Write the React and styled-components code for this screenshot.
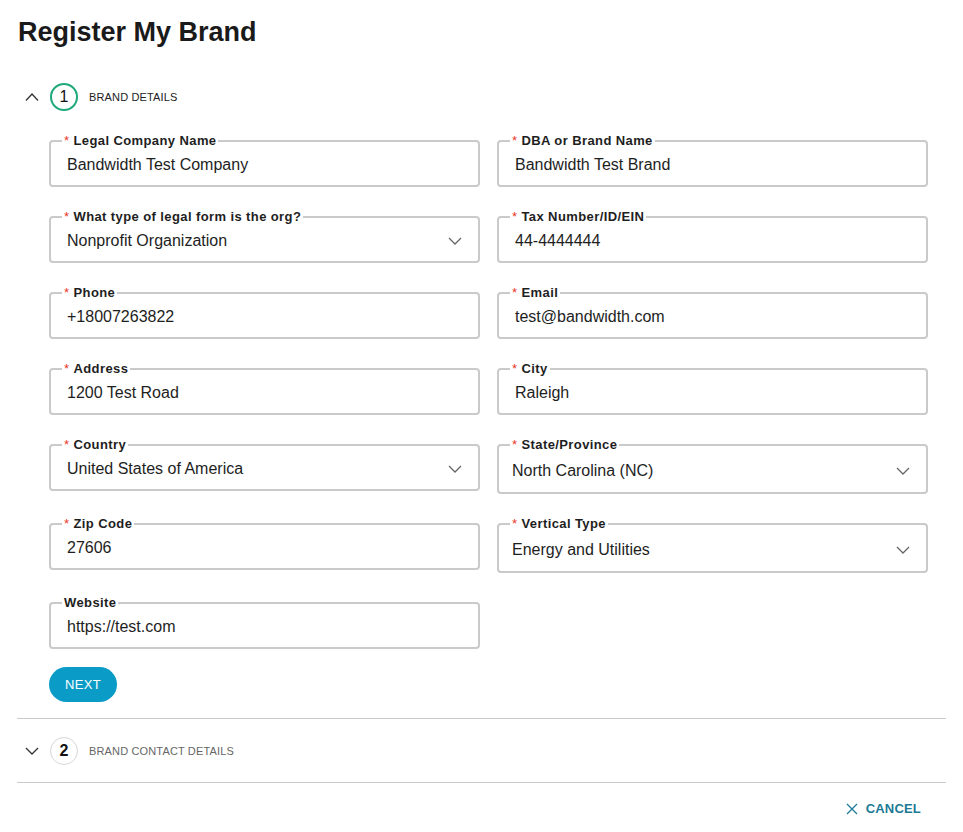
import styled, { createGlobalStyle } from "styled-components";

const Global = createGlobalStyle`
    body {
        margin: 0;
        background: #fff;
        font-family: "Liberation Sans", Arial, sans-serif;
        color: #1e1e1e;
    }
`;

const Page = styled.div`
    padding: 16px 17px 0 17px;
`;

const Title = styled.h1`
    margin: 0 0 0 1px;
    font-size: 27px;
    line-height: 32px;
    font-weight: 700;
    color: #1a1a1a;
`;

const Section = styled.section`
    border-bottom: 1px solid #c9c9c9;
    margin-top: ${props => props.$first ? '35px' : '0'};
    padding: ${props => props.$first ? '0 17px 16px 0' : '18px 17px 17px 0'};
`;

const Header = styled.div`
    display: flex;
    align-items: center;
    height: 28px;
    padding-left: 8px;
    gap: 11px;
`;

const Step = styled.span`
    display: flex;
    align-items: center;
    justify-content: center;
    box-sizing: border-box;
    width: 28px;
    height: 28px;
    border-radius: 50%;
    border: ${props => props.$active ? '2px solid #1ea97a' : '1.5px solid #d6d6d6'};
    font-size: 16px;
    font-weight: ${props => props.$active ? 400 : 700};
    color: #111;
`;

const StepTitle = styled.span`
    font-size: 11px;
    letter-spacing: 0.15px;
    color: ${props => props.$active ? '#222' : '#666'};
`;

const Body = styled.div`
    padding: 23px 0 0 32px;
`;

const Grid = styled.div`
    display: grid;
    grid-template-columns: 431px 431px;
    column-gap: 17px;
    row-gap: 23px;
    align-items: start;
`;

const Fieldset = styled.fieldset`
    display: flex;
    align-items: center;
    min-width: 0;
    margin: 0;
    padding: 0 16px 3px ${props => props.$tall ? '13px' : '16px'};
    border: 2px solid #cacaca;
    border-radius: 4px;
`;

const Legend = styled.legend`
    margin-left: ${props => props.$tall ? '-2px' : '-5px'};
    padding: 0 2px;
    font-size: 13px;
    line-height: 14px;
    font-weight: 700;
    letter-spacing: 0.4px;
    color: #1e1e1e;
`;

const Req = styled.span`
    color: #e8372c;
    margin-right: 4px;
    font-weight: 400;
`;

const Value = styled.div`
    flex: 1;
    height: ${props => props.$tall ? '37px' : '34px'};
    line-height: ${props => props.$tall ? '37px' : '34px'};
    font-size: 16px;
    color: #1e1e1e;
    white-space: nowrap;
`;

const Actions = styled.div`
    margin-top: 18px;
`;

const NextButton = styled.button`
    height: 35px;
    width: 68px;
    border: none;
    border-radius: 18px;
    background: #0b9bc7;
    color: #fff;
    font-family: inherit;
    font-size: 13px;
    letter-spacing: 0.3px;
    cursor: pointer;
`;

const Footer = styled.div`
    display: flex;
    justify-content: flex-end;
    padding: 18px 25px 0 0;
`;

const Cancel = styled.button`
    display: flex;
    align-items: center;
    gap: 8px;
    border: none;
    background: none;
    padding: 0;
    font-family: inherit;
    font-size: 13px;
    font-weight: 700;
    letter-spacing: 0.2px;
    line-height: 16px;
    color: #1b7a95;
    cursor: pointer;
`;

const Chevron = ({ up, color = '#555' }) => (
    <svg width="14" height="8" viewBox="0 0 14 8" fill="none">
        <polyline
            points={up ? "1,7.5 7,1 13,7.5" : "1,1 7,7 13,1"}
            stroke={color}
            strokeWidth="1.3"
        />
    </svg>
);

const fields = [
    { label: 'Legal Company Name', value: 'Bandwidth Test Company' },
    { label: 'DBA or Brand Name', value: 'Bandwidth Test Brand' },
    { label: 'What type of legal form is the org?', value: 'Nonprofit Organization', select: true },
    { label: 'Tax Number/ID/EIN', value: '44-4444444' },
    { label: 'Phone', value: '+18007263822' },
    { label: 'Email', value: 'test@bandwidth.com' },
    { label: 'Address', value: '1200 Test Road' },
    { label: 'City', value: 'Raleigh' },
    { label: 'Country', value: 'United States of America', select: true },
    { label: 'State/Province', value: 'North Carolina (NC)', select: true, tall: true },
    { label: 'Zip Code', value: '27606' },
    { label: 'Vertical Type', value: 'Energy and Utilities', select: true, tall: true },
    { label: 'Website', value: 'https://test.com', optional: true },
];

function Field({ label, value, select, tall, optional }) {
    return (
        <Fieldset $tall={tall}>
            <Legend $tall={tall}>
                {!optional && <Req>*</Req>}
                {label}
            </Legend>
            <Value $tall={tall}>{value}</Value>
            {select && <Chevron color="#666" />}
        </Fieldset>
    );
}

export default function App() {
    return (
        <Page>
            <Global />
            <Title>Register My Brand</Title>

            <Section $first>
                <Header>
                    <Chevron up color="#333" />
                    <Step $active>1</Step>
                    <StepTitle $active>BRAND DETAILS</StepTitle>
                </Header>
                <Body>
                    <Grid>
                        {fields.map(f => <Field key={f.label} {...f} />)}
                    </Grid>
                    <Actions>
                        <NextButton>NEXT</NextButton>
                    </Actions>
                </Body>
            </Section>

            <Section>
                <Header>
                    <Chevron color="#333" />
                    <Step>2</Step>
                    <StepTitle>BRAND CONTACT DETAILS</StepTitle>
                </Header>
            </Section>

            <Footer>
                <Cancel>
                    <svg width="12" height="12" viewBox="0 0 12 12">
                        <path d="M1 1L11 11M11 1L1 11" stroke="#1b7a95" strokeWidth="1.3" />
                    </svg>
                    CANCEL
                </Cancel>
            </Footer>
        </Page>
    );
}
